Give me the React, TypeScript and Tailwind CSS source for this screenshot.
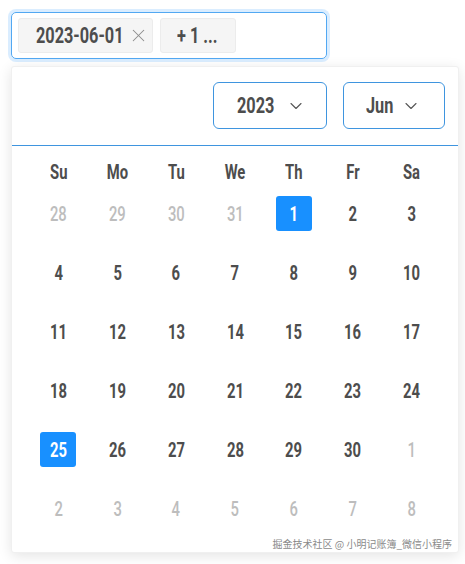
import { ChevronDown, X } from "lucide-react";

const font = {
  fontFamily: "Roboto, 'Liberation Sans', sans-serif",
};

const weekDays = ["Su", "Mo", "Tu", "We", "Th", "Fr", "Sa"];

type Day = { n: number; muted?: boolean; selected?: boolean };

function buildDays(): Day[] {
  const days: Day[] = [];
  [28, 29, 30, 31].forEach((n) => days.push({ n, muted: true }));
  for (let n = 1; n <= 30; n++) days.push({ n, selected: n === 1 || n === 25 });
  for (let n = 1; n <= 8; n++) days.push({ n, muted: true });
  return days;
}

// narrow, tall lettering like the condensed face in the picture
function Narrow({ children, left }: { children: string; left?: boolean }) {
  return (
    <span
      className={`inline-block whitespace-nowrap font-bold scale-x-[0.74] ${left ? "origin-left" : "origin-center"}`}
    >
      {children}
    </span>
  );
}

export default function App() {
  const days = buildDays();
  return (
    <div className="w-[465px] h-[564px] bg-white pl-[11px] pt-[12px]" style={font}>
      <div className="w-[316px] h-[47px] flex items-center gap-[7px] px-[6px] border border-[#52a8f2] rounded-[5px] shadow-[0_0_0_3px_rgba(24,144,255,0.16)]">
        <div className="w-[135px] h-[35px] flex items-center pl-[17px] bg-[#f5f5f5] border border-[#ececec] rounded-[3px] text-[22px] text-[#4d4d4d]">
          <div className="w-[86px] leading-none">
            <Narrow left>2023-06-01</Narrow>
          </div>
          <X size={21} strokeWidth={1.2} className="ml-[6px] text-[#8c8c8c]" />
        </div>
        <div className="w-[76px] h-[35px] flex items-center pl-[16px] bg-[#f5f5f5] border border-[#ececec] rounded-[3px] text-[22px] text-[#4d4d4d]">
          <div className="w-[45px] leading-none">
            <Narrow left>+ 1 ...</Narrow>
          </div>
        </div>
      </div>

      <div className="relative mt-[7px] w-[448px] h-[487px] bg-white border border-[#f0f0f0] rounded-[3px] shadow-[0_3px_14px_rgba(0,0,0,0.11)]">
        <div className="h-[79px] flex justify-end items-start gap-[16px] pt-[15px] pr-[13px] border-b border-[#3f95df]">
          <div className="w-[114px] h-[47px] flex items-center pl-[23px] border border-[#3f95df] rounded-[6px] text-[22px] text-[#4d4d4d]">
            <div className="w-[36px] leading-none">
              <Narrow left>2023</Narrow>
            </div>
            <ChevronDown size={20} strokeWidth={1.3} className="ml-[13px] text-[#555]" />
          </div>
          <div className="w-[102px] h-[47px] flex items-center pl-[22px] border border-[#3f95df] rounded-[6px] text-[22px] text-[#4d4d4d]">
            <div className="w-[26px] leading-none">
              <Narrow left>Jun</Narrow>
            </div>
            <ChevronDown size={20} strokeWidth={1.3} className="ml-[9px] text-[#555]" />
          </div>
        </div>

        <div className="px-[17px] pt-[13px]">
          <div className="grid grid-cols-7 h-[25px] items-center">
            {weekDays.map((d) => (
              <div key={d} className="text-center text-[20px] leading-none text-[#4d4d4d]">
                <Narrow>{d}</Narrow>
              </div>
            ))}
          </div>
          <div className="grid grid-cols-7">
            {days.map((d, i) => (
              <div key={i} className="h-[59px] flex items-center justify-center">
                <div
                  className={`w-[36px] h-[35px] flex items-center justify-center rounded-[3px] text-[20px] leading-none ${
                    d.selected
                      ? "bg-[#1890ff] text-white"
                      : d.muted
                        ? "text-[#bdbdbd] [&>span]:font-medium"
                        : "text-[#4d4d4d]"
                  }`}
                >
                  <Narrow>{String(d.n)}</Narrow>
                </div>
              </div>
            ))}
          </div>
        </div>

        <div
          className="absolute right-[6px] bottom-[1px] text-[10px] text-[#8a8a8a]"
          style={{ fontFamily: "'Noto Sans CJK SC', sans-serif" }}
        >
          掘金技术社区 @ 小明记账簿_微信小程序
        </div>
      </div>
    </div>
  );
}
